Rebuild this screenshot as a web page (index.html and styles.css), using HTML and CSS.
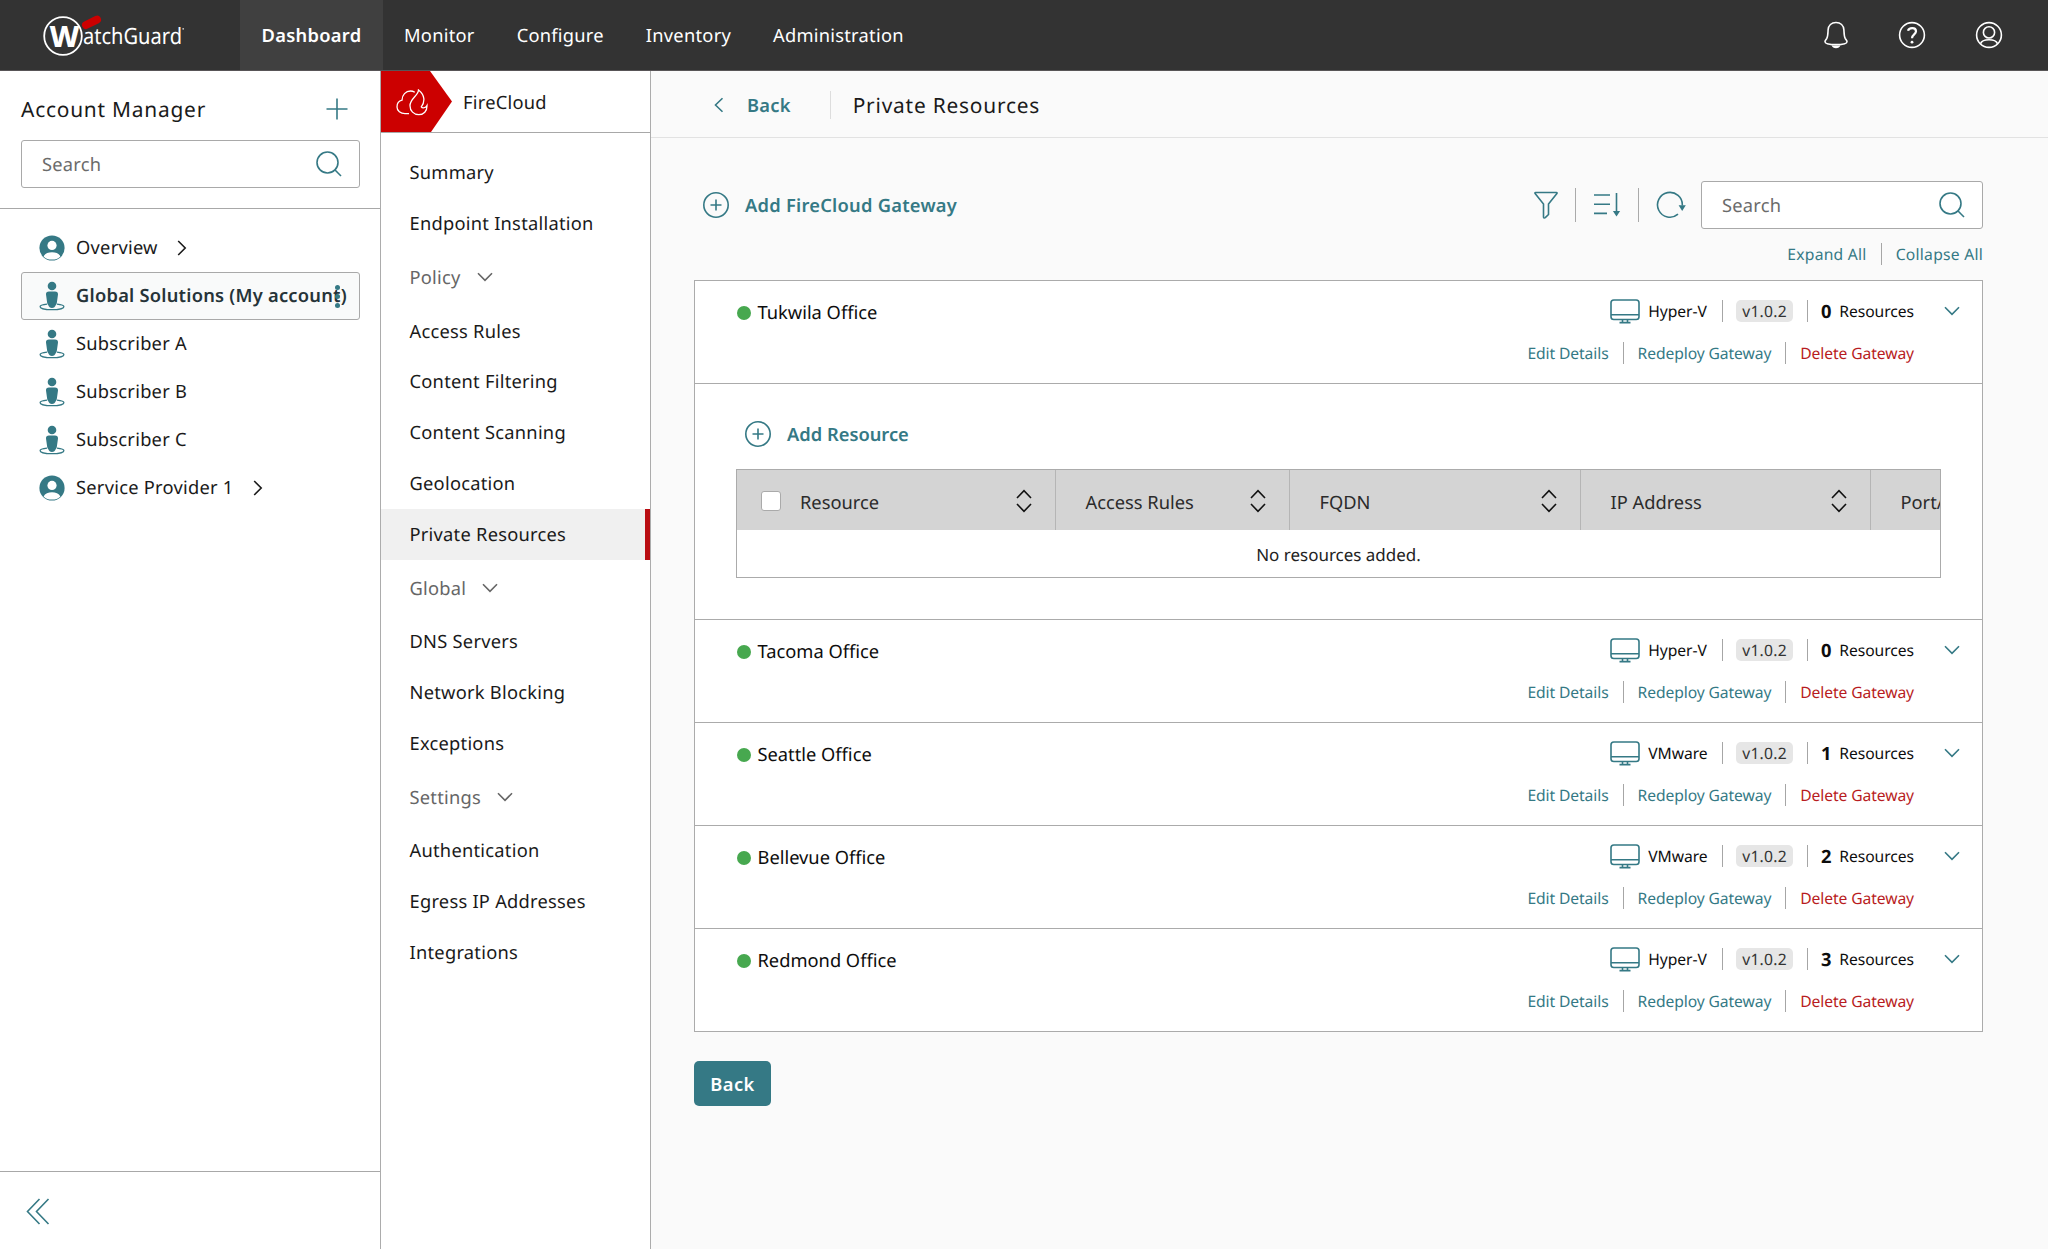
FILE: index.html
```html
<!DOCTYPE html>
<html lang="en">
<head>
<meta charset="utf-8">
<title>Private Resources</title>
<link rel="stylesheet" href="styles.css">
</head>
<body>
<svg class="sprite" aria-hidden="true">
  <symbol id="i-search" viewBox="0 0 26 26"><circle cx="11.5" cy="11.5" r="10.5"/><path d="M18.8 18.8 25 25"/></symbol>
  <symbol id="i-add" viewBox="0 0 28 28"><circle cx="14" cy="14" r="12.2"/><path d="M14 8.5v11M8.5 14h11"/></symbol>
  <symbol id="i-user" viewBox="0 0 26 26"><circle class="fill" cx="13" cy="13" r="12.6"/><circle class="hole" cx="13" cy="10.4" r="4.6"/><path class="hole" d="M4.6 21.4C6 18.4 9.4 17.3 13 17.3s7 1.100 8.400 4.100A12 12 0 0 1 13 24.600 12 12 0 0 1 4.600 21.400z"/></symbol>
  <symbol id="i-person" viewBox="0 0 26 30"><circle class="fill" cx="13" cy="5" r="4.300"/><path class="fill" d="M10 10.500h6c2 0 3.200 1.100 3 3l-1.200 8.500c-.2 1.200-.6 1.600-1.100 2.200C16.100 25.800 15 27 13 27s-3.100-1.200-3.700-2.800c-.5-.6-.9-1-1.100-2.200L7 13.500c-.2-1.900 1-3 3-3z"/><path d="M8 23.200c-4 .5-6.900 1.400-6.900 2.500 0 1.600 5.300 3 11.900 3s11.900-1.400 11.900-3c0-1.100-2.900-2-6.900-2.500"/></symbol>
  <symbol id="i-down" viewBox="0 0 16 10"><path d="M1 1.200l7 7.200 7-7.200"/></symbol>
  <symbol id="i-right" viewBox="0 0 10 16"><path d="M1.200 1l7 7-7 7"/></symbol>
  <symbol id="i-left" viewBox="0 0 10 16"><path d="M8.500 1.200l-7 6.800 7 6.800"/></symbol>
  <symbol id="i-sort" viewBox="0 0 16 24"><path d="M1 9l7-7.300L15 9M1 15l7 7.300L15 15"/></symbol>
  <symbol id="i-monitor" viewBox="0 0 30 25"><rect x="1" y="1" width="28" height="19.500" rx="2.800"/><path d="M1 15.800h28M12.500 20.500v3M17.500 20.500v3M9.500 23.600h11"/></symbol>
</svg>

<header class="topbar">
  <div class="brand">
    <svg class="logo" width="150" height="46" viewBox="0 0 150 46">
      <circle class="logo-ring" cx="22" cy="23" r="18.800"/>
      <text class="logo-w" x="8.500" y="34" textLength="30" lengthAdjust="spacingAndGlyphs">W</text>
      <path class="logo-bar" d="M45 12 56 6.600"/>
      <text class="logo-name" x="42" y="30.700" textLength="99" lengthAdjust="spacingAndGlyphs">atchGuard</text>
      <circle class="logo-dot" cx="142.200" cy="15.800" r=".9"/>
    </svg>
  </div>
  <nav class="tabs">
    <a class="tab tab-on">Dashboard</a><a class="tab">Monitor</a><a class="tab">Configure</a><a class="tab">Inventory</a><a class="tab">Administration</a>
  </nav>
  <div class="top-icons">
    <svg width="26" height="28" viewBox="0 0 26 28"><path d="M13 1.500c-4.600 0-7.600 3-7.900 7.400-.2 3.600-.2 6.300-1.300 8.500-.8 1.500-1.800 2.200-1.800 3.300 0 1.800 4.400 2.900 11 2.900s11-1.100 11-2.900c0-1.100-1-1.800-1.800-3.300-1.100-2.200-1.100-4.900-1.300-8.500-.3-4.400-3.300-7.400-7.900-7.400z"/><path class="solid" d="M8.500 24.200c3 .4 6 .4 9 0-.6 1.900-2.400 3-4.500 3s-3.900-1.100-4.500-3z"/></svg>
    <svg width="28" height="28" viewBox="0 0 28 28"><circle cx="14" cy="14" r="12.400"/><path class="thick" d="M10 9.800C10.800 6.200 18 5.900 18 10.300c0 3-4 3.200-4 7"/><circle class="solid" cx="14" cy="21.200" r="1.400"/></svg>
    <svg width="28" height="28" viewBox="0 0 28 28"><circle cx="14" cy="14" r="12.400"/><circle cx="14" cy="11.400" r="5.600"/><path d="M5.500 22.800c1-3 5-4 8.500-4s7.500 1 8.500 4"/></svg>
  </div>
</header>

<div class="shell">
  <aside class="accounts">
    <div class="accounts-head">
      <div class="accounts-title"><h2>Account Manager</h2><svg class="line" width="22" height="22" viewBox="0 0 22 22"><path d="M11 .5v21M.5 11h21"/></svg></div>
      <div class="search"><span>Search</span><svg class="line" width="26" height="26"><use href="#i-search"/></svg></div>
    </div>
    <ul class="account-list">
      <li><svg class="user"><use href="#i-user"/></svg><span>Overview</span><svg class="go"><use href="#i-right"/></svg></li>
      <li class="chosen"><svg class="person"><use href="#i-person"/></svg><span>Global Solutions (My account)</span><i class="kebab"></i></li>
      <li><svg class="person"><use href="#i-person"/></svg><span>Subscriber A</span></li>
      <li><svg class="person"><use href="#i-person"/></svg><span>Subscriber B</span></li>
      <li><svg class="person"><use href="#i-person"/></svg><span>Subscriber C</span></li>
      <li><svg class="user"><use href="#i-user"/></svg><span>Service Provider 1</span><svg class="go"><use href="#i-right"/></svg></li>
    </ul>
    <div class="accounts-foot"><svg class="line" width="24" height="27" viewBox="0 0 24 27"><path d="M13.500 1 1.500 13.500l12 12.500M22.500 1l-12 12.500 12 12.500"/></svg></div>
  </aside>

  <nav class="product">
    <div class="product-head">
      <div class="flag"><svg width="32" height="27" viewBox="0 0 32 27"><path d="M13 24.700H9C4.500 24.700 1 21.800 1 18s2-6.200 5-6.800C6 6 9.800 2 14.500 2c1.700 0 3 .5 4.300 1.300"/><path d="M22.500 1c0 5.500-8.500 8.500-8.500 15.700 0 5.200 3.800 9 8.800 9 4.800 0 8.400-3.500 8.200-9.200-.8 1.500-2 2.400-3.800 2.300-1 0-1.600-.4-1.900-.9 1.700-2.200 2.900-5.200 2.500-8.500-.4-3.500-2.800-6.400-5.300-8.400z"/></svg></div>
      <span>FireCloud</span>
    </div>
    <ul class="menu">
      <li>Summary</li>
      <li>Endpoint Installation</li>
      <li class="group">Policy<svg><use href="#i-down"/></svg></li>
      <li>Access Rules</li>
      <li>Content Filtering</li>
      <li>Content Scanning</li>
      <li>Geolocation</li>
      <li class="current">Private Resources</li>
      <li class="group">Global<svg><use href="#i-down"/></svg></li>
      <li>DNS Servers</li>
      <li>Network Blocking</li>
      <li>Exceptions</li>
      <li class="group">Settings<svg><use href="#i-down"/></svg></li>
      <li>Authentication</li>
      <li>Egress IP Addresses</li>
      <li>Integrations</li>
    </ul>
  </nav>

  <main>
    <div class="crumbs"><svg class="line" width="10" height="16"><use href="#i-left"/></svg><a>Back</a><h1>Private Resources</h1></div>
    <div class="content">
      <div class="toolbar">
        <a class="add"><svg class="line" width="28" height="28"><use href="#i-add"/></svg><span>Add FireCloud Gateway</span></a>
        <div class="tools">
          <svg class="line" width="24" height="28" viewBox="0 0 24 28"><path d="M1.500 1.500h21c.6 0 .7.500.4.900L14.500 13v10.500l-3.200 3.100c-.9.600-1.800.4-1.800-.7V13L1.100 2.400c-.3-.4-.2-.9.400-.9z"/></svg>
          <b></b>
          <svg class="line sortlist" width="28" height="26" viewBox="0 0 28 26"><path d="M1 3h16M1 12.200h16M1 21.400h13M23.500 1v20"/><path class="fill" d="M19.900 19h7.200l-3.600 5.500z"/></svg>
          <b></b>
          <svg class="line" width="30" height="28" viewBox="0 0 30 28"><path d="M22 23.200A12.400 12.400 0 1 1 26.300 14.500"/><path class="fill" d="M22.600 14.200h7.200L26.200 20z"/></svg>
        </div>
        <div class="search"><span>Search</span><svg class="line" width="26" height="26"><use href="#i-search"/></svg></div>
      </div>
      <div class="toggles"><a>Expand All</a><a>Collapse All</a></div>

      <div class="gateways">
        <section class="gateway">
          <div class="name"><i></i>Tukwila Office</div>
          <div class="info">
            <div class="meta"><svg class="line"><use href="#i-monitor"/></svg><span class="host">Hyper-V</span><span class="ver"><em>v1.0.2</em></span><span class="count"><strong>0</strong>Resources</span></div>
            <div class="links"><a>Edit Details</a><a>Redeploy Gateway</a><a class="del">Delete Gateway</a></div>
          </div>
          <svg class="line open"><use href="#i-down"/></svg>
        </section>
        <section class="detail">
          <a class="add"><svg class="line" width="28" height="28"><use href="#i-add"/></svg><span>Add Resource</span></a>
          <div class="grid">
            <div class="grid-head">
              <div class="cell"><i class="box"></i>Resource<svg><use href="#i-sort"/></svg></div>
              <div class="cell">Access Rules<svg><use href="#i-sort"/></svg></div>
              <div class="cell">FQDN<svg><use href="#i-sort"/></svg></div>
              <div class="cell">IP Address<svg><use href="#i-sort"/></svg></div>
              <div class="cell">Port/Protocol</div>
            </div>
            <div class="empty">No resources added.</div>
          </div>
        </section>
        <section class="gateway">
          <div class="name"><i></i>Tacoma Office</div>
          <div class="info">
            <div class="meta"><svg class="line"><use href="#i-monitor"/></svg><span class="host">Hyper-V</span><span class="ver"><em>v1.0.2</em></span><span class="count"><strong>0</strong>Resources</span></div>
            <div class="links"><a>Edit Details</a><a>Redeploy Gateway</a><a class="del">Delete Gateway</a></div>
          </div>
          <svg class="line open"><use href="#i-down"/></svg>
        </section>
        <section class="gateway">
          <div class="name"><i></i>Seattle Office</div>
          <div class="info">
            <div class="meta"><svg class="line"><use href="#i-monitor"/></svg><span class="host">VMware</span><span class="ver"><em>v1.0.2</em></span><span class="count"><strong>1</strong>Resources</span></div>
            <div class="links"><a>Edit Details</a><a>Redeploy Gateway</a><a class="del">Delete Gateway</a></div>
          </div>
          <svg class="line open"><use href="#i-down"/></svg>
        </section>
        <section class="gateway">
          <div class="name"><i></i>Bellevue Office</div>
          <div class="info">
            <div class="meta"><svg class="line"><use href="#i-monitor"/></svg><span class="host">VMware</span><span class="ver"><em>v1.0.2</em></span><span class="count"><strong>2</strong>Resources</span></div>
            <div class="links"><a>Edit Details</a><a>Redeploy Gateway</a><a class="del">Delete Gateway</a></div>
          </div>
          <svg class="line open"><use href="#i-down"/></svg>
        </section>
        <section class="gateway">
          <div class="name"><i></i>Redmond Office</div>
          <div class="info">
            <div class="meta"><svg class="line"><use href="#i-monitor"/></svg><span class="host">Hyper-V</span><span class="ver"><em>v1.0.2</em></span><span class="count"><strong>3</strong>Resources</span></div>
            <div class="links"><a>Edit Details</a><a>Redeploy Gateway</a><a class="del">Delete Gateway</a></div>
          </div>
          <svg class="line open"><use href="#i-down"/></svg>
        </section>
      </div>
      <button class="back">Back</button>
    </div>
  </main>
</div>
</body>
</html>
```
FILE: styles.css
```css
:root {
  --teal: #357985;
  --rule: #ababab;
  --red: #c00;
}
* { box-sizing: border-box; }
body {
  margin: 0;
  height: 1249px;
  overflow: hidden;
  display: flex;
  flex-direction: column;
  font: 18.29px/26px "Noto Sans", "Open Sans", sans-serif;
  text-rendering: geometricPrecision;
  letter-spacing: .25px;
  color: #1a1a1a;
  background: #fafafa;
}
ul { list-style: none; margin: 0; padding: 0; }
h1, h2 { margin: 0; font-size: 20.9px; font-weight: 400; letter-spacing: .78px; }
i, em { font-style: normal; }
svg { flex: none; display: block; fill: none; stroke: currentColor; stroke-width: 1.6; }
.sprite { position: absolute; width: 0; height: 0; }
.line { color: var(--teal); }
.fill { fill: currentColor; stroke: none; }
.hole { fill: #fff; stroke: none; }

/* top bar */
.topbar { flex: none; height: 71px; display: flex; background: #333; color: #fff; border-bottom: 1px solid #585557; }
.brand { flex: none; width: 240px; padding: 13px 0 0 41px; }
.logo text { fill: #fff; stroke: none; letter-spacing: 0; }
.logo-ring { stroke: #fff; stroke-width: 1.8; }
.logo-w { font-size: 29.5px; font-weight: 800; }
.logo-name { font-size: 22.5px; font-weight: 400; }
.logo-bar { stroke: var(--red); stroke-width: 8; stroke-linecap: round; }
.logo-dot { fill: #ccc; stroke: none; }
.tabs { display: flex; }
.tab { padding: 1px 21px 0; line-height: 70px; }
.tab-on { width: 143px; padding: 1px 0 0; text-align: center; background: #404040; font-weight: 600; letter-spacing: .3px; }
.top-icons { margin-left: auto; padding-right: 45px; display: flex; align-items: center; gap: 49px; }
.solid { fill: currentColor; stroke: none; }
.thick { stroke-width: 2.2; }

.shell { flex: 1; display: flex; min-height: 0; }

/* accounts */
.accounts { flex: none; width: 380px; display: flex; flex-direction: column; background: #fff; }
.accounts-head { height: 138px; padding: 25px 20px 0 21px; border-bottom: 1px solid #a8a8a8; }
.accounts-title { height: 44px; display: flex; justify-content: space-between; padding-right: 12px; }
.accounts-title h2 { line-height: 28px; }
.accounts-title svg { margin-top: 2px; }
.search { height: 48px; display: flex; align-items: center; justify-content: space-between; padding: 0 17px 0 20px; border: 1.5px solid #a9a9a9; border-radius: 3px; background: #fff; color: #6b6b6b; }
.search span, .add span { padding-top: 2px; }
.account-list { flex: 1; padding: 15px 20px 0 21px; }
.account-list li { height: 48px; display: flex; align-items: center; padding-left: 18px; white-space: nowrap; position: relative; }
.account-list span { margin-left: 11px; }
.user, .person { color: var(--teal); width: 26px; height: 26px; }
.person { height: 30px; stroke-width: 1.3; }
.go { width: 10px; height: 16px; margin-left: 19px; }
.account-list .chosen { padding-left: 17px; border: 1px solid #a9a9a9; border-radius: 3px; background: #f9fafa; color: #263338; font-weight: 600; letter-spacing: .24px; }
.kebab { position: absolute; right: 19px; top: 12px; width: 5px; height: 5px; border-radius: 50%; background: var(--teal); box-shadow: 0 9px var(--teal), 0 18px var(--teal); }
.accounts-foot { height: 78px; padding: 26px 26px; border-top: 1px solid #a8a8a8; }

/* product menu */
.product { flex: none; width: 271px; background: #fff; border: solid #acacac; border-width: 0 1px; }
.product-head { height: 62px; display: flex; align-items: center; border-bottom: 1px solid #a8a8a8; }
.flag { width: 71px; height: 61px; padding: 18px 0 0 15px; background: var(--red); color: #fff; clip-path: polygon(0 0, 49px 0, 100% 50%, 50px 100%, 0 100%); }
.flag svg { stroke-width: 1.3; }
.product-head span { margin-left: 11px; padding-top: 2px; }
.menu { padding-top: 14px; }
.menu li { height: 50.94px; padding: 2px 0 0 28.5px; display: flex; align-items: center; white-space: nowrap; }
.menu .group { height: 56.16px; color: #666; }
.group svg { width: 16px; height: 10px; margin: -2px 0 0 16px; }
.menu .current { background: #f0f0f0; border-right: 5px solid #b90d12; }

/* main column */
main { flex: 1; min-width: 0; }
.crumbs { height: 67px; display: flex; align-items: center; padding: 1px 0 0 63px; border-bottom: 1px solid #e2e2e2; }
.crumbs a { margin-left: 23px; padding-top: 2px; color: var(--teal); font-weight: 600; }
.crumbs h1 { margin-left: 39px; padding: 2px 0 0 22px; border-left: 1.5px solid #ddd; }
.content { padding: 43px 65px 0 43px; }
.toolbar { height: 48px; display: flex; align-items: center; }
.add { display: flex; align-items: center; gap: 15px; padding-left: 8px; color: var(--teal); font-weight: 600; }
.tools { margin-left: auto; display: flex; align-items: center; gap: 17px; padding-right: 15px; }
.tools b { width: 1px; height: 34px; background: #aaa; }
.toolbar .search { width: 282px; }
.toggles { display: flex; justify-content: flex-end; padding-top: 14px; height: 51px; }
.toggles a, .links a { font-size: 15.67px; line-height: 22px; height: 22px; color: var(--teal); }
.toggles a + a, .links a + a { margin-left: 14px; padding-left: 14px; border-left: 1px solid #a6a6a6; }

.gateways { border: 1px solid var(--rule); border-bottom: 0; background: #fff; letter-spacing: 0; color: #0d0d0d; }
.gateway { height: 103px; display: flex; border-bottom: 1px solid var(--rule); }
.name { flex: 1; display: flex; height: 26px; align-items: center; margin-top: 19px; padding-left: 41.5px; gap: 7px; }
.name i { width: 14px; height: 14px; margin-top: -1px; border-radius: 50%; background: #47a84f; }
.info { display: flex; flex-direction: column; align-items: flex-end; padding-top: 19px; gap: 20px; }
.meta { display: flex; align-items: center; height: 22px; font-size: 15.67px; letter-spacing: -.06px; }
.meta .line { width: 30px; height: 25px; margin-right: 8px; }
.meta span { height: 22px; line-height: 22px; }
.host { padding-right: 15px; width: 74px; }
.ver { padding: 0 14px 0 13px; border: solid #a6a6a6; border-width: 0 1px; }
.ver em { display: block; padding: 0 6px; border-radius: 5px; background: #e6e6e6; color: #333; letter-spacing: .25px; }
.count { padding-left: 13px; }
.count strong { font-size: 18.29px; margin-right: 8px; vertical-align: -1px; line-height: 20px; }
.links { display: flex; letter-spacing: -.1px; }
.links .del { color: #b81c22; }
.open { width: 16px; height: 10px; margin: 25px 22px 0 30px; }

.detail { height: 236px; padding: 35px 41px 0; border-bottom: 1px solid var(--rule); }
.detail .add { height: 30px; }
.grid { margin-top: 20px; height: 109px; border: 1px solid #ababab; overflow: hidden; }
.grid-head { display: grid; grid-template-columns: 319px 234px 291px 290px 300px; height: 60px; background: #d4d4d4; color: #2b2b2b; }
.cell { display: flex; align-items: center; padding: 5px 23px 0 29.5px; border-right: 1px solid #b5b5b5; white-space: nowrap; }
.cell:first-child { padding-left: 24px; }
.cell svg { width: 16px; height: 24px; margin: -4px 0 0 auto; color: #111; }
.box { width: 20px; height: 20px; margin: -4px 19px 0 0; border: 1px solid #aaa; border-radius: 3px; background: #fff; }
.empty { height: 48px; line-height: 50px; text-align: center; font-size: 16.98px; color: #222; }

.back { display: block; margin-top: 29px; width: 77px; height: 45px; border: 0; border-radius: 5px; background: var(--teal); color: #fff; font: inherit; font-weight: 600; letter-spacing: .4px; padding: 0; }
```
